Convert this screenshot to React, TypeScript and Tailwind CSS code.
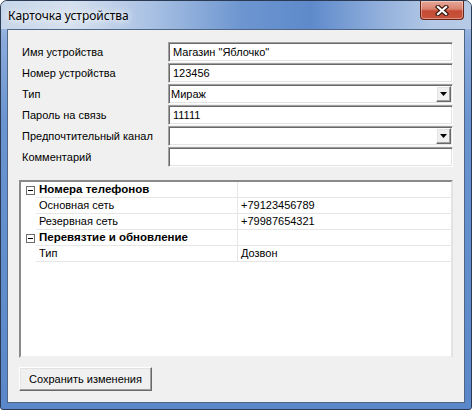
import React from 'react'

const fields = [
  { label: 'Имя устройства', value: 'Магазин "Яблочко"', combo: false },
  { label: 'Номер устройства', value: '123456', combo: false },
  { label: 'Тип', value: 'Мираж', combo: true },
  { label: 'Пароль на связь', value: '11111', combo: false },
  { label: 'Предпочтительный канал', value: '', combo: true },
  { label: 'Комментарий', value: '', combo: false },
]

const props = [
  { name: 'Номера телефонов', value: '', category: true },
  { name: 'Основная сеть', value: '+79123456789', category: false },
  { name: 'Резервная сеть', value: '+79987654321', category: false },
  { name: 'Перевязтие и обновление', value: '', category: true },
  { name: 'Тип', value: 'Дозвон', category: false },
]

const sunken =
  'border border-t-[#a0a0a0] border-l-[#a0a0a0] border-b-white border-r-white shadow-[inset_1px_1px_0_#696969,inset_-1px_-1px_0_#e3e3e3]'
const raised =
  'border border-t-white border-l-white border-b-[#696969] border-r-[#696969] shadow-[inset_-1px_-1px_0_#a0a0a0,inset_1px_1px_0_#e3e3e3]'

const CloseGlyph: React.FC = () => (
  <svg width="14" height="11" viewBox="0 0 14 11">
    <path d="M3 2 L11 9 M11 2 L3 9" stroke="#3b1a14" strokeWidth="4.5" strokeLinecap="square" />
    <path d="M3 2 L11 9 M11 2 L3 9" stroke="#ffffff" strokeWidth="2.2" strokeLinecap="square" />
  </svg>
)

const ComboArrow: React.FC = () => (
  <div className={`w-[15px] h-[16px] mr-[1px] bg-[#f0f0f0] flex items-center justify-center ${raised}`}>
    <svg width="7" height="4" viewBox="0 0 7 4">
      <path d="M0 0 H7 L3.5 4 Z" fill="#000" />
    </svg>
  </div>
)

export default function App() {
  return (
    <div
      className="w-[472px] h-[410px] flex flex-col border border-[#2a3a52] rounded-t-[7px] rounded-b-[3px] overflow-hidden bg-[linear-gradient(to_bottom,#b9cce6_0px,#8aaadb_40px,#6a94d0_120px,#5a87c9_100%)]"
      style={{ fontFamily: '"Liberation Sans", Arial, sans-serif' }}
    >
      <div className="h-[28px] shrink-0 flex justify-between items-start bg-[linear-gradient(to_right,#c6d5e9_0px,#d6e1ef_70px,#a9c1e3_150px,#6d96d0_240px,#5e8acb_310px,#92b0dc_380px,#b3c8e5_430px,#b7cbe6_100%)]">
        <div
          className="pl-[7px] pt-[7px] text-[12px] leading-[15px] text-black [text-shadow:0_0_6px_#ffffff,0_0_10px_#ffffff]"
          style={{ fontFamily: '"Noto Sans", "Open Sans", sans-serif' }}
        >
          Карточка устройства
        </div>
        <div className="mr-[7px] w-[44px] h-[19px] rounded-b-[4px] border border-t-0 border-[#6a2418] flex items-center justify-center bg-[linear-gradient(to_bottom,#e6a899_0%,#d9826f_45%,#c44a34_55%,#c9553b_100%)] shadow-[inset_0_0_0_1px_rgba(255,255,255,0.35)]">
          <CloseGlyph />
        </div>
      </div>

      <div className="mx-[6px] flex-1 flex flex-col border border-[#4f6786] bg-[#f0f0f0] text-[11px] text-black">
        <div className="pt-[12px] pl-[14px] pr-[11px] flex flex-col gap-[1px]">
          {fields.map((f) => (
            <div key={f.label} className="h-[20px] flex items-center">
              <div className="w-[146px] leading-[13px]">{f.label}</div>
              <div className={`w-[285px] h-[20px] bg-white flex items-center ${sunken}`}>
                <div className={`flex-1 leading-[13px] ${f.combo ? 'pl-[2px]' : 'pl-[4px]'}`}>{f.value}</div>
                {f.combo && <ComboArrow />}
              </div>
            </div>
          ))}
        </div>

        <div className="mx-[11px] mt-[13px] h-[178px] bg-white flex flex-col border-2 border-t-[#8a8a8a] border-l-[#8a8a8a] border-b-[#f0f0f0] border-r-[#e3e3e3]">
          {props.map((p) => (
            <div key={p.name} className="h-[16px] flex">
              <div className="w-[15px] flex items-center pl-[5px]">
                {p.category && (
                  <div className="w-[9px] h-[9px] border border-[#6e6e6e] bg-white flex items-center justify-center">
                    <div className="w-[5px] h-[1px] bg-black" />
                  </div>
                )}
              </div>
              <div className="flex-1 flex border-b border-[#e6e6e6]">
                <div className={`w-[202px] border-r border-[#e6e6e6] pl-[3px] leading-[15px] ${p.category ? 'font-bold text-[11.5px]' : ''}`}>
                  {p.name}
                </div>
                <div className="flex-1 pl-[3px] leading-[15px]">{p.value}</div>
              </div>
            </div>
          ))}
        </div>

        <div className="mt-[9px] ml-[11px]">
          <div className={`w-[133px] h-[24px] bg-[#f0f0f0] flex items-center justify-center leading-[13px] ${raised}`}>
            Сохранить изменения
          </div>
        </div>
      </div>
      <div className="h-[6px] shrink-0" />
    </div>
  )
}
